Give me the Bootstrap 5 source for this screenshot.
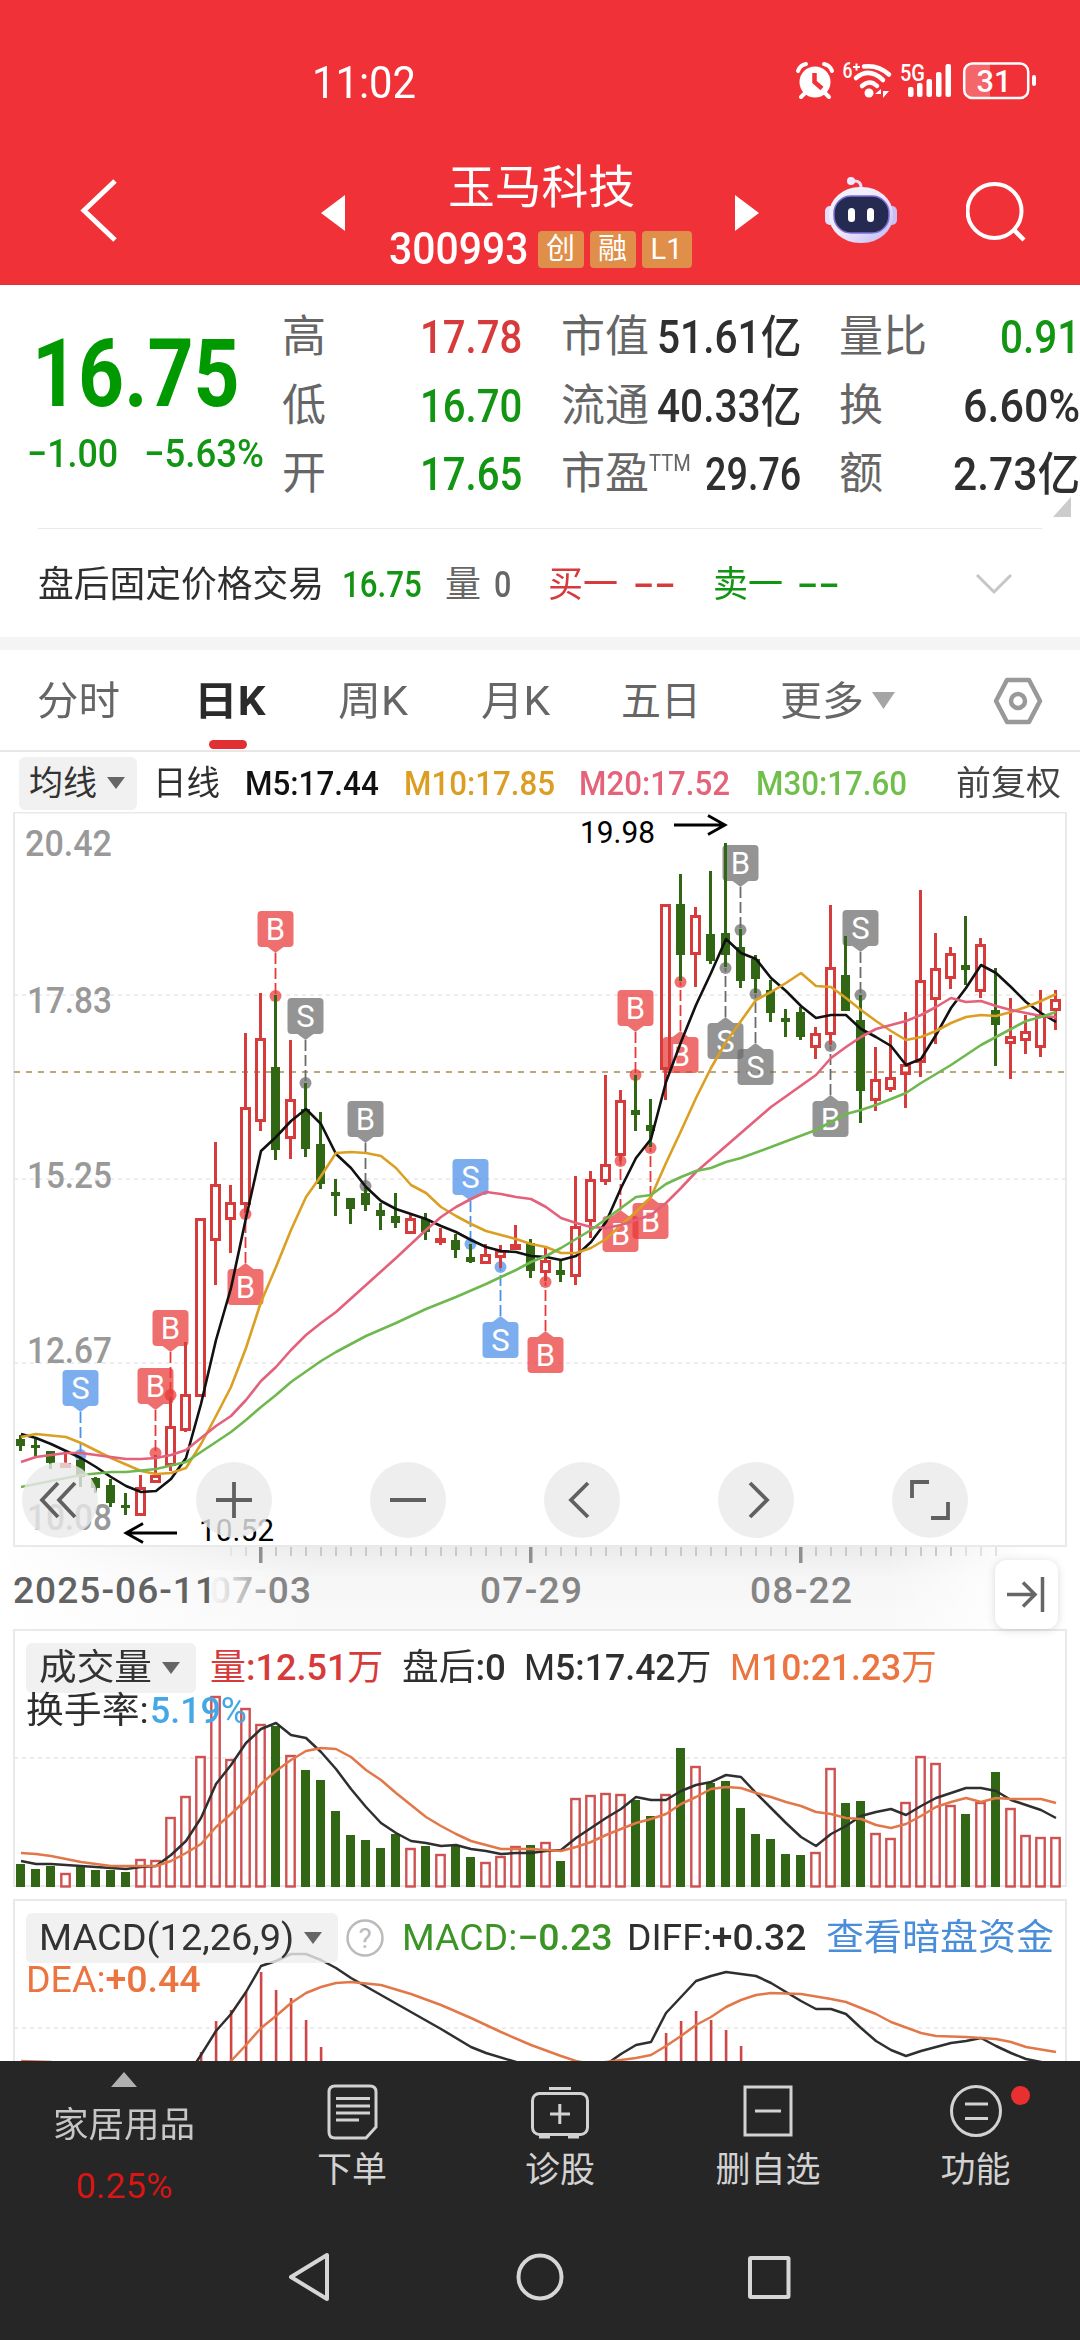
<!DOCTYPE html>
<html lang="zh-CN">
<head>
<meta charset="utf-8">
<meta name="viewport" content="width=device-width, initial-scale=1">
<title>玉马科技 300993</title>
<link rel="stylesheet" href="https://cdn.jsdelivr.net/npm/bootstrap@5.3.0/dist/css/bootstrap.min.css">
<style>
  body{width:1080px;height:2340px;overflow:hidden;background:#fff;color:#2f2f2f;font-family:Roboto,"Noto Sans CJK SC",sans-serif;line-height:1}
  svg{display:block}
  .app{width:1080px;height:2340px}
  .fit{display:inline-block;white-space:nowrap}
  .fit>span{display:inline-block;transform-origin:0 50%;white-space:nowrap}
  .c-red{color:#d63a3a}.c-green{color:#129512}.c-gray{color:#666}
  .med,.hdr b{font-weight:500}
  .top{height:285px;background:#f13138;color:#fff;border-bottom:1px solid #d9363c}
  .status{height:108px;padding:56px 42px 0 312px}
  .clock{font-size:45px;line-height:54px}
  .titlebar{height:176px;display:grid;grid-template-columns:321px 438px 66px 141px 1fr}
  .sname{font-size:46px;line-height:52px;margin-top:53px}
  .scode{font-size:45px;font-weight:500;line-height:40px;gap:6px}
  .tagx{background:#e08f4a;border-radius:4px;height:37px;width:46px;font-size:29px;line-height:36px;text-align:center}
  .tagx.wide{width:50px}
  .quote{height:243px;display:grid;grid-template-columns:262px 1fr;margin:0 0 0 20px}
  .price{font-size:95px;font-weight:700;line-height:96px;color:#009a00;padding:41px 0 0 12px}
  .chg{font-size:39px;font-weight:500;line-height:40px;padding:12px 0 0 7px;gap:26px}
  .facts{display:grid;grid-template-columns:240px 39px 240px 38px 241px;grid-auto-rows:68.5px;padding-top:18px;align-content:start}
  .facts .more{grid-column:5;margin-top:-14px}
  .fact{display:flex;justify-content:space-between;align-items:center;font-size:44px;white-space:nowrap}
  .fact .lab{color:#666;font-weight:400}
  .fact .ttm{font-size:23px}
  .fact b{font-weight:500;font-size:46px}
  .rule{height:1px;margin:0 38px;background:#e9e9e9}
  .after{height:108px;display:grid;grid-template-columns:304px 103px 49px 54px 85px 80px 84px 177px 40px;padding:4px 0 0 38px;align-items:center;font-size:36px}
  .band{height:13px;background:#f4f4f4}
  .tabsrow{height:102px;display:grid;grid-template-columns:157px 144px 143px 140px 159px 213px 50px;padding:4px 0 0 37px;align-items:center;border-bottom:2px solid #e7e7e7;font-size:40px;color:#666}
  .tabsrow .on{color:#2b2b2b;font-weight:700;position:relative}
  .tabsrow .on i{position:absolute;left:15px;top:58px;width:38px;height:9px;border-radius:5px;background:#e13033}
  .marow{height:60px;display:grid;grid-template-columns:134px 92px 159px 175px 177px 200px 1fr;padding:2px 0 0 19px;align-items:center;font-size:34px;font-weight:500}
  .pill{background:#f1f1f1;border-radius:6px;display:flex;align-items:center;color:#333;font-weight:400;gap:10px}
  .pill.avg{width:118px;height:53px;padding-left:10px}
  .pill.vol{width:170px;height:50px;padding-left:13px}
  .pill.mac{width:312px;height:50px;padding-left:13px;background:rgba(238,238,238,.8)}
  .tri{width:0;height:0;border:9px solid transparent;border-top:12px solid #666;border-bottom:0}
  .stage{position:relative;height:1249px;overflow:hidden}
  .stage>svg{position:absolute;left:0;top:0}
  .hdr{position:absolute;left:0;width:1080px;display:grid;align-items:center;font-size:36px;padding-left:26px}
  .h-vol{top:829px;height:54px;grid-template-columns:184px 192px 122px 206px 1fr}
  .h-turn{top:879px;height:40px;grid-template-columns:124px 1fr}
  .h-macd{top:1099px;height:54px;grid-template-columns:320px 56px 225px 199px 1fr}
  .h-dea{top:1148px;height:40px}
  .orange{color:#eb7440}.sky{color:#45a8e6}.link{color:#4a8dd8}.leaf{color:#3c9427}
  .m5{color:#111}.m10{color:#dc9e22}.m20{color:#e5637a}.m30{color:#6fbf4a}.adj{color:#444}
  .bottomx{height:279px;background:#262626;color:#d2d2d2}
  .navx{height:160px;display:grid;grid-template-columns:248px 208px 208px 208px 207px;font-size:35px}
  .navx>div{display:flex;flex-direction:column;align-items:center}
  .navx svg{height:60px;margin-top:20px}
  .navx .t{margin-top:11px;line-height:38px}
  .navx svg.up{height:15px;margin-top:11px}
  .sector{margin-top:20px;line-height:38px;color:#c6c6c6}
  .sectorpct{margin-top:23px;line-height:38px;color:#d81616}
</style>
</head>
<body>
<div class="app d-flex flex-column">
  <header class="top">
    <div class="status d-flex justify-content-between">
      <div class="clock"><span class="fit" data-w="104">11:02</span></div>
      <svg width="244" height="44" viewBox="794 56 244 44" fill="#fff">
        <circle cx="815" cy="82" r="15.500"/><path d="M798 71q2-6 8-7M832 71q-2-6-8-7M805 93l-4 4M825 93l4 4" stroke="#fff" stroke-width="4" stroke-linecap="round" fill="none"/>
        <path d="M814.500 73v9l7.500 6.500" stroke="#f13138" stroke-width="4.500" fill="none"/>
        <text x="842.500" y="78" font-size="22" font-weight="500" textLength="10" lengthAdjust="spacingAndGlyphs">6</text><path d="M853 67h7M856.500 63.500v7" stroke="#fff" stroke-width="2"/>
        <g fill="none" stroke="#fff" stroke-width="4.500" stroke-linecap="round"><path d="M864 66.500q14-2 25 8"/><path d="M856 78q13-11 27 2"/><path d="M862 86q8-7 15 0"/></g>
        <circle cx="869" cy="93" r="4.500"/><path d="M881 89l-6 5h6zM883 98l6-7h-6z"/>
        <text x="900" y="81" font-size="23" font-weight="500" textLength="25" lengthAdjust="spacingAndGlyphs">5G</text>
        <g><rect x="908" y="87" width="5.500" height="10" rx="2"/><rect x="917" y="83" width="5.500" height="14" rx="2"/><rect x="926.500" y="79" width="5.500" height="18" rx="2"/><rect x="936" y="72" width="5.500" height="25" rx="2"/><rect x="945.500" y="64" width="5.500" height="33" rx="2"/></g>
        <path d="M990 64H973Q965 64 965 72V90Q965 98 973 98H990Z" fill="#f5666b"/>
        <rect x="964.200" y="63.500" width="64" height="34.500" rx="8" fill="none" stroke="#fff" stroke-width="2.500"/><rect x="1032" y="75" width="4" height="11" rx="2"/>
        <text x="976.500" y="92" font-size="32" font-weight="500" textLength="35" lengthAdjust="spacingAndGlyphs">31</text>
      </svg>
    </div>
    <div class="titlebar">
      <svg width="321" height="176" viewBox="0 108 321 176"><path d="M115 181L84 210.500L115 240" fill="none" stroke="#fff" stroke-width="5"/></svg>
      <div class="d-flex">
        <svg width="26" height="176" viewBox="0 108 26 176"><path d="M0 213L24 195V231Z" fill="#fff"/></svg>
        <div class="flex-fill text-center">
          <div class="sname"><span class="fit" data-w="187">玉马科技</span></div>
          <div class="d-flex align-items-center justify-content-center mt-3 scode"><span class="fit me-1" data-w="139">300993</span><span class="tagx fw-normal">创</span><span class="tagx fw-normal">融</span><span class="tagx wide fw-normal">L1</span></div>
        </div>
        <svg width="26" height="176" viewBox="0 108 26 176"><path d="M26 213L2 195V231Z" fill="#fff"/></svg>
      </div>
      <span></span>
      <svg width="141" height="176" viewBox="825 108 141 176">
        <defs><linearGradient id="bot" x1="0" y1="0" x2="1" y2="1"><stop offset="0" stop-color="#eef6fd"/><stop offset=".5" stop-color="#f1e8fb"/><stop offset="1" stop-color="#b9b6f2"/></linearGradient></defs>
        <path d="M861 190q1-10-8-9" fill="none" stroke="#e6dcf8" stroke-width="3"/><circle cx="851" cy="181" r="4" fill="#eceaff"/>
        <rect x="825" y="206" width="12" height="19" rx="5" fill="#e4def9"/><rect x="885" y="206" width="12" height="19" rx="5" fill="#c9bff3"/>
        <rect x="829" y="187" width="64" height="56" rx="31" ry="27" fill="url(#bot)"/><rect x="834" y="196" width="55" height="37" rx="17" fill="#252b50" stroke="#7d70d8" stroke-width="1.500"/>
        <rect x="848" y="208" width="7" height="14" rx="3.500" fill="#fff"/><rect x="867" y="208" width="7" height="14" rx="3.500" fill="#fff"/>
      </svg>
      <svg width="80" height="176" viewBox="966 108 80 176"><circle cx="994.500" cy="211" r="27" fill="none" stroke="#fff" stroke-width="4"/><path d="M1013 229L1024 240" stroke="#fff" stroke-width="4.500"/></svg>
    </div>
  </header>

  <section>
    <div class="quote">
      <div>
        <div class="price"><span class="fit" data-w="208">16.75</span></div>
        <div class="chg c-green d-flex"><span class="fit" data-w="91">−1.00</span><span class="fit" data-w="120">−5.63%</span></div>
      </div>
      <div class="facts">
        <div class="fact"><span class="lab">高</span><b class="c-red"><span class="fit" data-w="102">17.78</span></b></div><i></i>
        <div class="fact"><span class="lab">市值</span><b><span class="fit" data-w="144">51.61亿</span></b></div><i></i>
        <div class="fact"><span class="lab">量比</span><b class="c-green"><span class="fit" data-w="80">0.91</span></b></div>
        <div class="fact"><span class="lab">低</span><b class="c-green"><span class="fit" data-w="102">16.70</span></b></div><i></i>
        <div class="fact"><span class="lab">流通</span><b><span class="fit" data-w="144">40.33亿</span></b></div><i></i>
        <div class="fact"><span class="lab">换</span><b><span class="fit" data-w="117">6.60%</span></b></div>
        <div class="fact"><span class="lab">开</span><b class="c-green"><span class="fit" data-w="102">17.65</span></b></div><i></i>
        <div class="fact"><span class="lab d-flex">市盈<span class="fit ttm" data-w="42">TTM</span></span><b><span class="fit" data-w="96">29.76</span></b></div><i></i>
        <div class="fact"><span class="lab">额</span><b><span class="fit" data-w="127">2.73亿</span></b></div>
        <div class="more"><svg width="241" height="24"><path d="M232 2V22H214Z" fill="#ccc"/></svg></div>
      </div>
    </div>
    <div class="rule"></div>
    <div class="after">
      <span class="fit" data-w="286">盘后固定价格交易</span><span class="fit c-green med" data-w="80">16.75</span><span class="c-gray">量</span><span class="fit c-gray med" data-w="17">0</span><span class="fit c-red" data-w="70">买一</span><span class="fit c-red med" data-w="42">--</span><span class="fit c-green" data-w="70">卖一</span><span class="fit c-green med" data-w="42">--</span>
      <svg width="40" height="24"><path d="M3 2L20 19L37 2" fill="none" stroke="#c6c6c6" stroke-width="3"/></svg>
    </div>
    <div class="band"></div>
  </section>

  <nav class="tabsrow">
    <span class="fit" data-w="83">分时</span><span class="on"><span class="fit" data-w="71">日K</span><i></i></span><span class="fit" data-w="70">周K</span><span class="fit" data-w="69">月K</span><span class="fit" data-w="80">五日</span>
    <span class="d-flex align-items-center"><span class="fit" data-w="84">更多</span><svg width="34" height="24"><path d="M8 2H31L19.500 19Z" fill="#a5a5a5"/></svg></span>
    <svg width="50" height="50"><path d="M14 3H36L47 24L36 45H14L3 24Z" fill="none" stroke="#999" stroke-width="4.500" stroke-linejoin="round"/><circle cx="25" cy="24" r="7" fill="none" stroke="#999" stroke-width="4.500"/></svg>
  </nav>
  <div class="marow">
    <span class="pill avg"><span class="fit" data-w="68">均线</span><i class="tri"></i></span>
    <span class="fit fw-normal" data-w="67">日线</span><span class="fit m5" data-w="134">M5:17.44</span><span class="fit m10" data-w="151">M10:17.85</span><span class="fit m20" data-w="151">M20:17.52</span><span class="fit m30" data-w="151">M30:17.60</span><span class="fit fw-normal adj" data-w="105">前复权</span>
  </div>

  <main class="stage">
    <svg id="chart" width="1080" height="1249" viewBox="0 812 1080 1249" font-family="Roboto, 'Noto Sans CJK SC', sans-serif">
      <defs>
        <linearGradient id="axv" x1="0" y1="0" x2="0" y2="1"><stop offset="0" stop-color="#ebebeb"/><stop offset=".35" stop-color="#f6f6f6"/><stop offset="1" stop-color="#fafafa"/></linearGradient>
        <linearGradient id="axh" x1="0" y1="0" x2="1" y2="0"><stop offset="0" stop-color="#fff"/><stop offset=".3" stop-color="#fff" stop-opacity="0"/><stop offset=".82" stop-color="#fff" stop-opacity="0"/><stop offset=".95" stop-color="#fff"/></linearGradient>
        <linearGradient id="fade" x1="0" y1="0" x2="1" y2="0"><stop offset="0" stop-color="#fafafa"/><stop offset=".2" stop-color="#fafafa" stop-opacity=".9"/><stop offset="1" stop-color="#fafafa" stop-opacity="0"/></linearGradient>
      </defs>
    </svg>
    <div class="hdr h-vol">
      <span class="pill vol"><span class="fit" data-w="113">成交量</span><i class="tri"></i></span>
      <span class="fit c-red" data-w="173">量<b>:12.51</b>万</span><span class="fit" data-w="104">盘后<b>:0</b></span><span class="fit" data-w="187">M<b>5:17.42</b>万</span><span class="fit orange" data-w="207">M<b>10:21.23</b>万</span>
    </div>
    <div class="hdr h-turn"><span class="fit" data-w="123">换手率:</span><span class="fit sky" data-w="97"><b>5.19</b>%</span></div>
    <div class="hdr h-macd">
      <span class="pill mac"><span class="fit" data-w="255">MACD(12,26,9)</span><i class="tri"></i></span>
      <svg width="38" height="38"><circle cx="19" cy="19" r="17.500" fill="none" stroke="#bbb" stroke-width="2.500"/><text x="19" y="29" text-anchor="middle" font-size="28" fill="#bbb">?</text></svg>
      <span class="fit leaf" data-w="210">MACD:<b>−0.23</b></span><span class="fit" data-w="179">DIFF:<b>+0.32</b></span><span class="fit link" data-w="228">查看暗盘资金</span>
    </div>
    <div class="hdr h-dea"><span class="fit orange" data-w="175">DEA:<b>+0.44</b></span></div>
  </main>

  <footer class="bottomx">
    <div class="navx">
      <div><svg class="up" width="26" height="15"><path d="M13 0L26 15H0Z" fill="#b0b0b0"/></svg><span class="fit sector" data-w="142">家居用品</span><span class="fit sectorpct" data-w="97">0.25%</span></div>
      <div><svg width="60" viewBox="322 2081 60 60" fill="none" stroke="#d2d2d2" stroke-width="3"><path d="M335 2086H370Q376 2086 376 2092V2127L366 2138H335Q329 2138 329 2132V2092Q329 2086 335 2086Z"/><path d="M336 2098.500H370M336 2106H370M336 2113H370M336 2120H359"/></svg><span class="t">下单</span></div>
      <div><svg width="60" viewBox="530 2081 60 60" fill="none" stroke="#d2d2d2" stroke-width="3"><rect x="532.500" y="2093.500" width="55" height="41" rx="7"/><path d="M549 2088.500H571M539 2137H550M568 2137H579M550 2114H570M559.800 2104V2124"/></svg><span class="t">诊股</span></div>
      <div><svg width="60" viewBox="737 2081 60 60" fill="none" stroke="#d2d2d2" stroke-width="3"><rect x="744" y="2087" width="46" height="48"/><path d="M754 2111H780"/></svg><span class="t">删自选</span></div>
      <div><svg width="116" viewBox="917 2081 116 60" fill="none" stroke="#d2d2d2" stroke-width="3"><circle cx="975" cy="2111" r="24.500"/><path d="M964 2104H987M964 2118.500H987"/><circle cx="1019.500" cy="2095.500" r="9.500" fill="#e83030" stroke="none"/></svg><span class="t">功能</span></div>
    </div>
    <svg width="1080" height="119" viewBox="0 2221 1080 119" fill="none" stroke="#d6d6d6" stroke-width="4" stroke-linejoin="round"><path d="M327 2255V2299L291 2277Z"/><circle cx="540" cy="2277" r="21.500"/><rect x="750" y="2258" width="38.500" height="39" rx="1"/></svg>
  </footer>
</div>

<script src="https://cdn.jsdelivr.net/npm/bootstrap@5.3.0/dist/js/bootstrap.bundle.min.js"></script>
<script>
// Condense each figure to the column width it is given.
document.querySelectorAll('.fit').forEach(function(el){
  var s=document.createElement('span');
  while(el.firstChild) s.appendChild(el.firstChild);
  el.appendChild(s);
  var w=+el.dataset.w, n=s.offsetWidth;
  el.style.width=w+'px';
  s.style.transform='scaleX('+(w/n)+')';
});

var X=function(i){return 20.5+15*i}, RED='#d63c3c', GRN='#316614', out='';
// [direction, high, bodyTop, bodyBottom, low]
var K=[['g',1435,1439,1446,1451],['g',1439,1445,1447,1456],['g',1451,1451,1463,1469],['r',1454,1463,1468,1468],['g',1458,1460,1477,1487],['g',1477,1478,1488,1493],['g',1479,1485,1503,1507],['g',1493,1505,1508,1515],['r',1475,1487,1516,1516],['r',1455,1475,1483,1483],
['r',1397,1426,1466,1471],['r',1342,1394,1431,1432],['r',1218,1218,1397,1397],['r',1142,1184,1241,1285],['r',1185,1202,1220,1253],['r',1033,1107,1205,1213],['r',993,1038,1122,1131],['g',995,1067,1150,1160],['r',1040,1099,1139,1159],['g',1083,1109,1149,1157],
['g',1112,1144,1184,1189],['g',1179,1192,1196,1216],['g',1198,1198,1209,1224],['g',1187,1193,1205,1211],['g',1203,1210,1216,1230],['g',1193,1216,1223,1228],['r',1215,1218,1234,1234],['g',1213,1219,1232,1240],['r',1228,1238,1242,1245],['g',1234,1240,1250,1258],
['g',1244,1257,1262,1263],['r',1244,1254,1264,1264],['r',1245,1250,1258,1268],['r',1225,1244,1250,1250],['g',1239,1243,1271,1278],['r',1246,1260,1273,1281],['g',1261,1270,1275,1282],['r',1176,1226,1277,1285],['r',1171,1179,1222,1238],['r',1075,1164,1182,1185],
['r',1090,1100,1156,1161],['g',1075,1110,1115,1131],['g',1099,1125,1131,1147],['r',904,904,1070,1100],['g',874,904,955,981],['r',907,915,955,987],['g',871,934,961,964],['g',843,933,955,967],['g',929,947,981,988],['g',955,959,979,993],
['g',980,990,1013,1022],['g',1009,1018,1022,1037],['g',1007,1012,1037,1040],['r',1027,1033,1048,1059],['r',905,967,1035,1045],['g',936,975,1011,1011],['g',995,1020,1091,1123],['r',1047,1079,1101,1111],['r',1035,1077,1090,1092],['r',1012,1064,1075,1108],
['r',890,980,1063,1077],['r',933,968,1000,1044],['r',947,953,979,989],['g',916,965,970,985],['r',938,944,992,998],['g',968,1010,1025,1066],['r',998,1036,1044,1079],['r',1015,1031,1041,1054],['r',990,1015,1048,1057],['r',990,999,1011,1030]];
var V=[1864,1869,1866,1873,1867,1870,1870,1872,1859,1860,1817,1796,1756,1696,1759,1708,1724,1726,1755,1770,1780,1811,1835,1840,1848,1834,1848,1846,1854,1845,1857,1862,1856,1846,1845,1842,1861,1798,1795,1793,1794,1800,1816,1794,1748,1766,1783,1781,1808,1834,1839,1854,1855,1852,1768,1803,1801,1833,1838,1802,1756,1763,1805,1814,1802,1772,1808,1835,1837,1837];
// [bar, label, tone, dot y, 1 = flag above / -1 = flag below]
var M=[[4,'S','#4b90ea',1455,1],[9,'B','#ea3838',1453,1],[10,'B','#ea3838',1395,1],[15,'B','#ea3838',1214,-1],[17,'B','#ea3838',996,1],[19,'S','#6b6b6b',1083,1],[23,'B','#6b6b6b',1186,1],[30,'S','#4b90ea',1244,1],[32,'S','#4b90ea',1267,-1],[35,'B','#ea3838',1282,-1],[40,'B','#ea3838',1161,-1],[42,'B','#ea3838',1148,-1],[41,'B','#ea3838',1075,1],[44,'B','#ea3838',982,-1],[47,'S','#6b6b6b',968,-1],[48,'B','#6b6b6b',930,1],[49,'S','#6b6b6b',994,-1],[54,'B','#6b6b6b',1046,-1],[56,'S','#6b6b6b',995,1]];
function R(x,y,w,h,f,e){return '<rect x="'+x+'" y="'+y+'" width="'+w+'" height="'+h+'" fill="'+f+'" '+(e||'')+'/>'}
function H(y,c,d,w){return '<path d="M14 '+y+'H1066" stroke="'+c+'" stroke-width="'+w+'" stroke-dasharray="'+d+'"/>'}
function line(s,c,w){ // s: "bar y bar y ..."
  var a=s.trim().split(/\s+/),p='';for(var i=0;i<a.length;i+=2)p+=(i?'L':'M')+(X(+a[i])+.5)+' '+a[i+1];
  return '<path d="'+p+'" fill="none" stroke="'+c+'" stroke-width="'+w+'" stroke-linejoin="round"/>'}
function seq(a){return a.split(' ').map(function(v,i){return i+' '+v}).join(' ')}
function T(x,y,s,w,t,c,wt,e){return '<text x="'+x+'" y="'+y+'" font-size="'+s+'" textLength="'+w+'" lengthAdjust="'+(e||'spacingAndGlyphs')+'" fill="'+c+'" font-weight="'+wt+'">'+t+'</text>'}

// frames and grids
out+=R(0,1547,1080,88,'url(#axv)')+R(0,1547,1080,88,'url(#axh)');
out+=R(14,812.5,1052,733.5,'none','stroke="#e9e9e9" stroke-width="2"')+R(14,1630,1052,256,'#fff','stroke="#e9e9e9" stroke-width="2"')+R(14,1900,1052,300,'#fff','stroke="#e9e9e9" stroke-width="2"');
[995,1179,1363,1758,2028].forEach(function(y){out+=H(y,'#e8e8e8','4 4',1.5)});
out+=T(25,856,37,87,'20.42','#999',500)+T(27,1013,37,85,'17.83','#999',500)+T(27,1188,37,85,'15.25','#999',500)+T(27,1363,37,85,'12.67','#999',500)+T(27,1530,37,85,'10.08','#999',500);
out+=H(1072,'#bda67a','6 6',2);
// trade flags
M.forEach(function(m){var x=X(m[0]),y=m[3],up=m[4]>0,b=up?y-85:y+55,e=up?b+36:b,t=up?6:-6;
  out+='<g fill="'+m[2]+'"><circle cx="'+x+'" cy="'+y+'" r="6" opacity=".72"/><path d="M'+x+' '+(e+t)+'V'+y+'" stroke="'+m[2]+'" stroke-width="1.8" stroke-dasharray="11 4"/><g opacity=".72"><rect x="'+(x-18)+'" y="'+b+'" width="36" height="36" rx="4"/><path d="M'+(x-8)+' '+e+'L'+x+' '+(e+t)+'L'+(x+8)+' '+e+'Z"/></g><text x="'+x+'" y="'+(b+29)+'" font-size="31" fill="#fff" text-anchor="middle">'+m[1]+'</text></g>'});
// candles
K.forEach(function(k,i){var x=X(i),g=k[0]=='g',c=g?GRN:RED;
  if(g){out+=R(x-1.5,k[1],3,k[4]-k[1],c)+R(x-4.5,k[2],9,Math.max(3,k[3]-k[2]),c)}
  else{out+=R(x-1.5,k[1],3,k[2]-k[1],c)+R(x-1.5,k[3],3,k[4]-k[3],c)+R(x-4,k[2]+1.5,8,Math.max(2,k[3]-k[2]-3),'none','stroke="'+c+'" stroke-width="3"')}});
// moving averages
out+=line(seq('1434 1438 1444 1451 1458 1467 1477 1486 1492 1491 1479 1458 1404 1340 1288 1218 1151 1137 1121 1109 1124 1154 1168 1187 1201 1209 1214 1219 1226 1232 1240 1247 1251 1252 1256 1257 1260 1256 1242 1222 1188 1158 1139 1082 1042 1005 973 939 953 959 978 991 1006 1018 1015 1015 1029 1037 1046 1065 1059 1035 1008 988 965 973 987 1002 1013 1022'),'#111',2.6);
out+=line('0 1437 1 1434 3 1437 4 1443 6 1458 8 1471 9 1474 10 1473 11 1468 12 1444 13 1416 14 1387 15 1348 16 1302 17 1267 18 1230 19 1197 20 1176 21 1153 22 1152 23 1153 24 1156 25 1168 26 1185 27 1193 28 1207 29 1216 30 1224 31 1231 32 1235 33 1239 34 1244 35 1247 36 1253 37 1253 38 1248 39 1239 40 1225 41 1212 42 1197 43 1163 44 1131 45 1098 46 1068 47 1042 48 1021 49 1000 50 992 51 983 52 973 53 986 54 987 55 998 56 1010 57 1021 58 1031 59 1040 60 1037 61 1031 62 1023 63 1017 64 1015 65 1016 66 1012 67 1007 68 1001 69 994','#dba023',2.6);
out+=line('0 1462 1 1457 2 1455 3 1453 4 1453 6 1457 7 1459 8 1459 9 1458 10 1455 11 1450 12 1438 13 1426 14 1416 15 1400 16 1381 17 1367 18 1350 19 1335 20 1323 21 1312 23 1285 25 1258 27 1230 28 1217 29 1207 30 1199 31 1192 32 1194 33 1197 34 1199 35 1207 36 1218 37 1223 38 1227 39 1228 40 1225 41 1220 42 1215 43 1203 44 1188 45 1172 47 1146 50 1107 53 1075 54 1058 55 1047 56 1037 57 1029 58 1025 59 1021 60 1015 61 1007 62 998 63 1002 64 1001 65 1006 66 1010 67 1013 68 1016 69 1017','#e3617a',2.6);
out+=line('0 1487 2 1481 4 1475 6 1472 7 1472 9 1469 11 1462 12 1452 13 1442 14 1432 15 1420 16 1407 17 1395 18 1382 20 1361 21 1352 23 1336 25 1323 27 1309 29 1297 31 1284 33 1270 34 1262 35 1256 36 1248 38 1230 40 1208 41 1197 42 1195 43 1184 44 1177 45 1171 46 1168 47 1162 48 1158 50 1147 53 1130 55 1114 56 1110 57 1105 59 1093 60 1083 62 1065 64 1045 66 1029 67 1021 68 1017 69 1012','#6fb850',2.6);
// high / low callouts
out+=T(580,843,31,75,'19.98','#000',400)+'<path d="M674 825H725M708 815.5L725 825L708 834.500" fill="none" stroke="#000" stroke-width="2.800"/>';
out+=T(199,1541,31,75,'10.52','#000',400)+'<path d="M177 1533H126M143 1523.500L126 1533L143 1542.500" fill="none" stroke="#000" stroke-width="2.800"/>';
// floating tools
var icons=['M58 1483L42 1500L58 1517M75 1483L59 1500L75 1517','M216 1500H252M234 1482V1518','M390 1500H426','M588 1483L571 1500L588 1517','M750 1483L767 1500L750 1517','M912 1498V1482H929M948 1502V1518H931'];
icons.forEach(function(d,i){out+='<circle cx="'+(60+174*i)+'" cy="1500" r="38" fill="rgb(234,234,234)" fill-opacity=".8"/><path d="'+d+'" fill="none" stroke="#606060" stroke-width="3.800"/>'});
// date axis
for(var i=14;i<66;i++){var big=i==16||i==34||i==52;out+=R(X(i)-(big?1.5:.5),1547,big?3.5:2,big?16:9,big?'#8f8f8f':'#c9c9c9',i<16?'opacity="'+(.3*(i-13))+'"':(i>62?'opacity=".5"':''))}
out+=T(210,1603,37,101,'07-03','#858585',500,'spacing')+R(205,1570,70,40,'url(#fade)')+T(480,1603,37,102,'07-29','#858585',500,'spacing')+T(750,1603,37,102,'08-22','#858585',500,'spacing')+T(13,1603,37,203,'2025-06-11','#636363',500,'spacing');
out+='<rect x="995" y="1560" width="63" height="69" rx="12" fill="#fff" style="filter:drop-shadow(0 1px 4px rgba(0,0,0,.14))"/><path d="M1007 1594.500H1035M1023 1582.500L1035 1594.500L1023 1606.500M1042.500 1577V1612" fill="none" stroke="#666" stroke-width="3.500"/>';
// volume
V.forEach(function(y,i){var x=X(i);out+=K[i][0]=='g'?R(x-4.5,y,9,1887-y,GRN):R(x-4.2,y+1,8.4,1885.5-y,'none','stroke="#cf5252" stroke-width="2.400"')});
out+=line(seq('1861 1864 1864 1865 1866 1867 1868 1869 1867 1866 1855 1841 1818 1784 1765 1743 1729 1723 1735 1738 1752 1769 1789 1807 1823 1833 1841 1843 1846 1845 1849 1851 1854 1853 1853 1851 1850 1838 1828 1818 1809 1797 1800 1800 1791 1785 1782 1775 1777 1793 1808 1823 1837 1846 1834 1826 1816 1812 1809 1815 1806 1798 1793 1788 1788 1791 1800 1805 1810 1818'),'#2f2f2f',2.5);
out+=line(seq('1853 1854 1856 1859 1862 1864 1866 1866 1866 1866 1861 1853 1844 1827 1814 1800 1784 1771 1760 1751 1748 1749 1757 1770 1780 1793 1805 1817 1826 1834 1841 1845 1849 1849 1849 1850 1851 1847 1842 1835 1829 1823 1819 1814 1804 1797 1789 1787 1788 1793 1797 1802 1806 1812 1814 1818 1819 1825 1828 1824 1816 1807 1802 1798 1802 1798 1799 1799 1799 1803'),'#e2784a',2.5);
// MACD
[[12,2052],[13,2021],[14,2010],[15,1992],[16,1972],[17,1990],[18,1998],[19,2020],[20,2047],[43,2033],[44,2021],[45,2011],[46,2020],[47,2030],[48,2046]].forEach(function(b){out+=R(X(b[0])-.7,b[1],2.6,100,'#cf4646')});
out+=line('11 2078 12 2055 13 2031 14 2014 15 1992 16 1966 17 1961 18 1954 19 1954 20 1960 21 1968 22 1978 24 1995 26 2012 28 2029 30 2047 31 2053 33 2062 36 2080 38 2075 40 2054 41 2045 42 2042 43 2013 44 1997 45 1981 46 1976 47 1972 49 1976 50 1983 51 1992 52 2001 53 2009 54 2009 55 2014 56 2028 57 2041 58 2050 59 2056 60 2051 61 2047 62 2043 63 2041 64 2038 65 2046 66 2053 67 2059 69 2065','#2f2f2f',2.5);
out+=line('0 2061 2 2062 6 2075 13 2075 14 2061 15 2045 16 2028 17 2016 18 2003 19 1993 20 1987 21 1983 22 1982 24 1985 26 1994 28 2005 30 2018 32 2032 34 2045 36 2056 37 2061 38 2064 40 2060 41 2058 42 2055 43 2046 44 2036 45 2025 46 2017 47 2007 48 2000 49 1995 50 1993 52 1994 54 1999 55 2002 56 2008 57 2014 58 2022 60 2033 61 2036 63 2037 65 2039 66 2042 67 2047 69 2052','#e2784a',2.5);
document.getElementById('chart').insertAdjacentHTML('beforeend',out);
</script>
</body>
</html>
